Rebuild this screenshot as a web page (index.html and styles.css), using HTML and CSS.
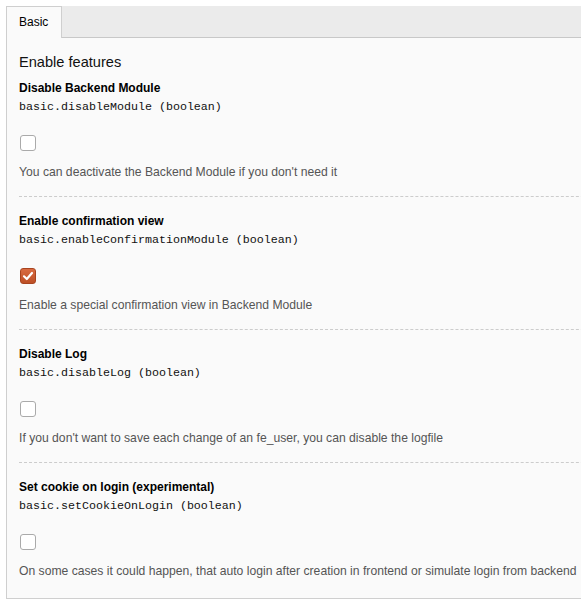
FILE: index.html
```html
<!DOCTYPE html>
<html>
<head>
<meta charset="utf-8">
<link rel="stylesheet" href="styles.css">
</head>
<body>
<div class="wrap">
  <div class="tabs">
    <div class="tab">Basic</div>
  </div>
  <div class="panel">
    <h2 class="heading">Enable features</h2>
    <div class="item">
      <div class="label">Disable Backend Module</div>
      <div class="key">basic.disableModule (boolean)</div>
      <span class="cb"></span>
      <div class="desc">You can deactivate the Backend Module if you don't need it</div>
    </div>
    <div class="item">
      <div class="label">Enable confirmation view</div>
      <div class="key">basic.enableConfirmationModule (boolean)</div>
      <span class="cb checked"><svg viewBox="0 0 16 16" width="16" height="16"><path d="M4 8.3 L6.8 11 L12 5" fill="none" stroke="#fff" stroke-width="2.2" stroke-linecap="round" stroke-linejoin="round"/></svg></span>
      <div class="desc">Enable a special confirmation view in Backend Module</div>
    </div>
    <div class="item">
      <div class="label">Disable Log</div>
      <div class="key">basic.disableLog (boolean)</div>
      <span class="cb"></span>
      <div class="desc">If you don't want to save each change of an fe_user, you can disable the logfile</div>
    </div>
    <div class="item">
      <div class="label">Set cookie on login (experimental)</div>
      <div class="key">basic.setCookieOnLogin (boolean)</div>
      <span class="cb"></span>
      <div class="desc">On some cases it could happen, that auto login after creation in frontend or simulate login from backend</div>
    </div>
  </div>
</div>
</body>
</html>
```
FILE: styles.css
```css
html, body {
  margin: 0;
  padding: 0;
  background: #fff;
  overflow: hidden;
}
body {
  padding: 6px 0 0 6px;
  font-family: "Liberation Sans", Arial, sans-serif;
  color: #000;
}
.wrap {
  width: 620px;
}
.tabs {
  display: flex;
  background: #ebebeb;
  border-bottom: 1px solid #c8c8c8;
  height: 31px;
}
.tab {
  box-sizing: border-box;
  height: 32px;
  width: 56px;
  margin-bottom: -1px;
  padding: 0 12px;
  background: #fafafa;
  border: 1px solid #cfcfcf;
  border-bottom: none;
  font-size: 12px;
  line-height: 30px;
  color: #000;
}
.panel {
  background: #fafafa;
  border-left: 1px solid #cfcfcf;
  border-bottom: 1px solid #cfcfcf;
  padding: 14px 12px 18px 12px;
}
.heading {
  margin: 0 0 7px 0;
  font-size: 14.6px;
  font-weight: normal;
  line-height: 20px;
  color: #111;
}
.item {
  border-bottom: 1px dashed #cccccc;
  padding: 0 0 15px 0;
}
.item + .item {
  padding-top: 15px;
}
.item:last-child {
  border-bottom: none;
  padding-bottom: 0;
}
.label {
  font-size: 12px;
  font-weight: bold;
  line-height: 18px;
}
.key {
  font-family: "Liberation Mono", "Courier New", monospace;
  font-size: 11.67px;
  line-height: 18px;
  margin-top: 1px;
  color: #111;
}
.cb {
  display: block;
  box-sizing: border-box;
  width: 16px;
  height: 16px;
  margin: 19px 0 12px 1px;
  border: 1px solid #aaaaaa;
  border-radius: 3px;
  background: #fff;
}
.cb.checked {
  border: 1px solid #a8441f;
  background: linear-gradient(#d96b41, #bd4f25);
  position: relative;
}
.cb.checked svg {
  position: absolute;
  left: -1px;
  top: -1px;
}
.desc {
  font-size: 12.17px;
  line-height: 18px;
  color: #555;
  white-space: nowrap;
}
```
